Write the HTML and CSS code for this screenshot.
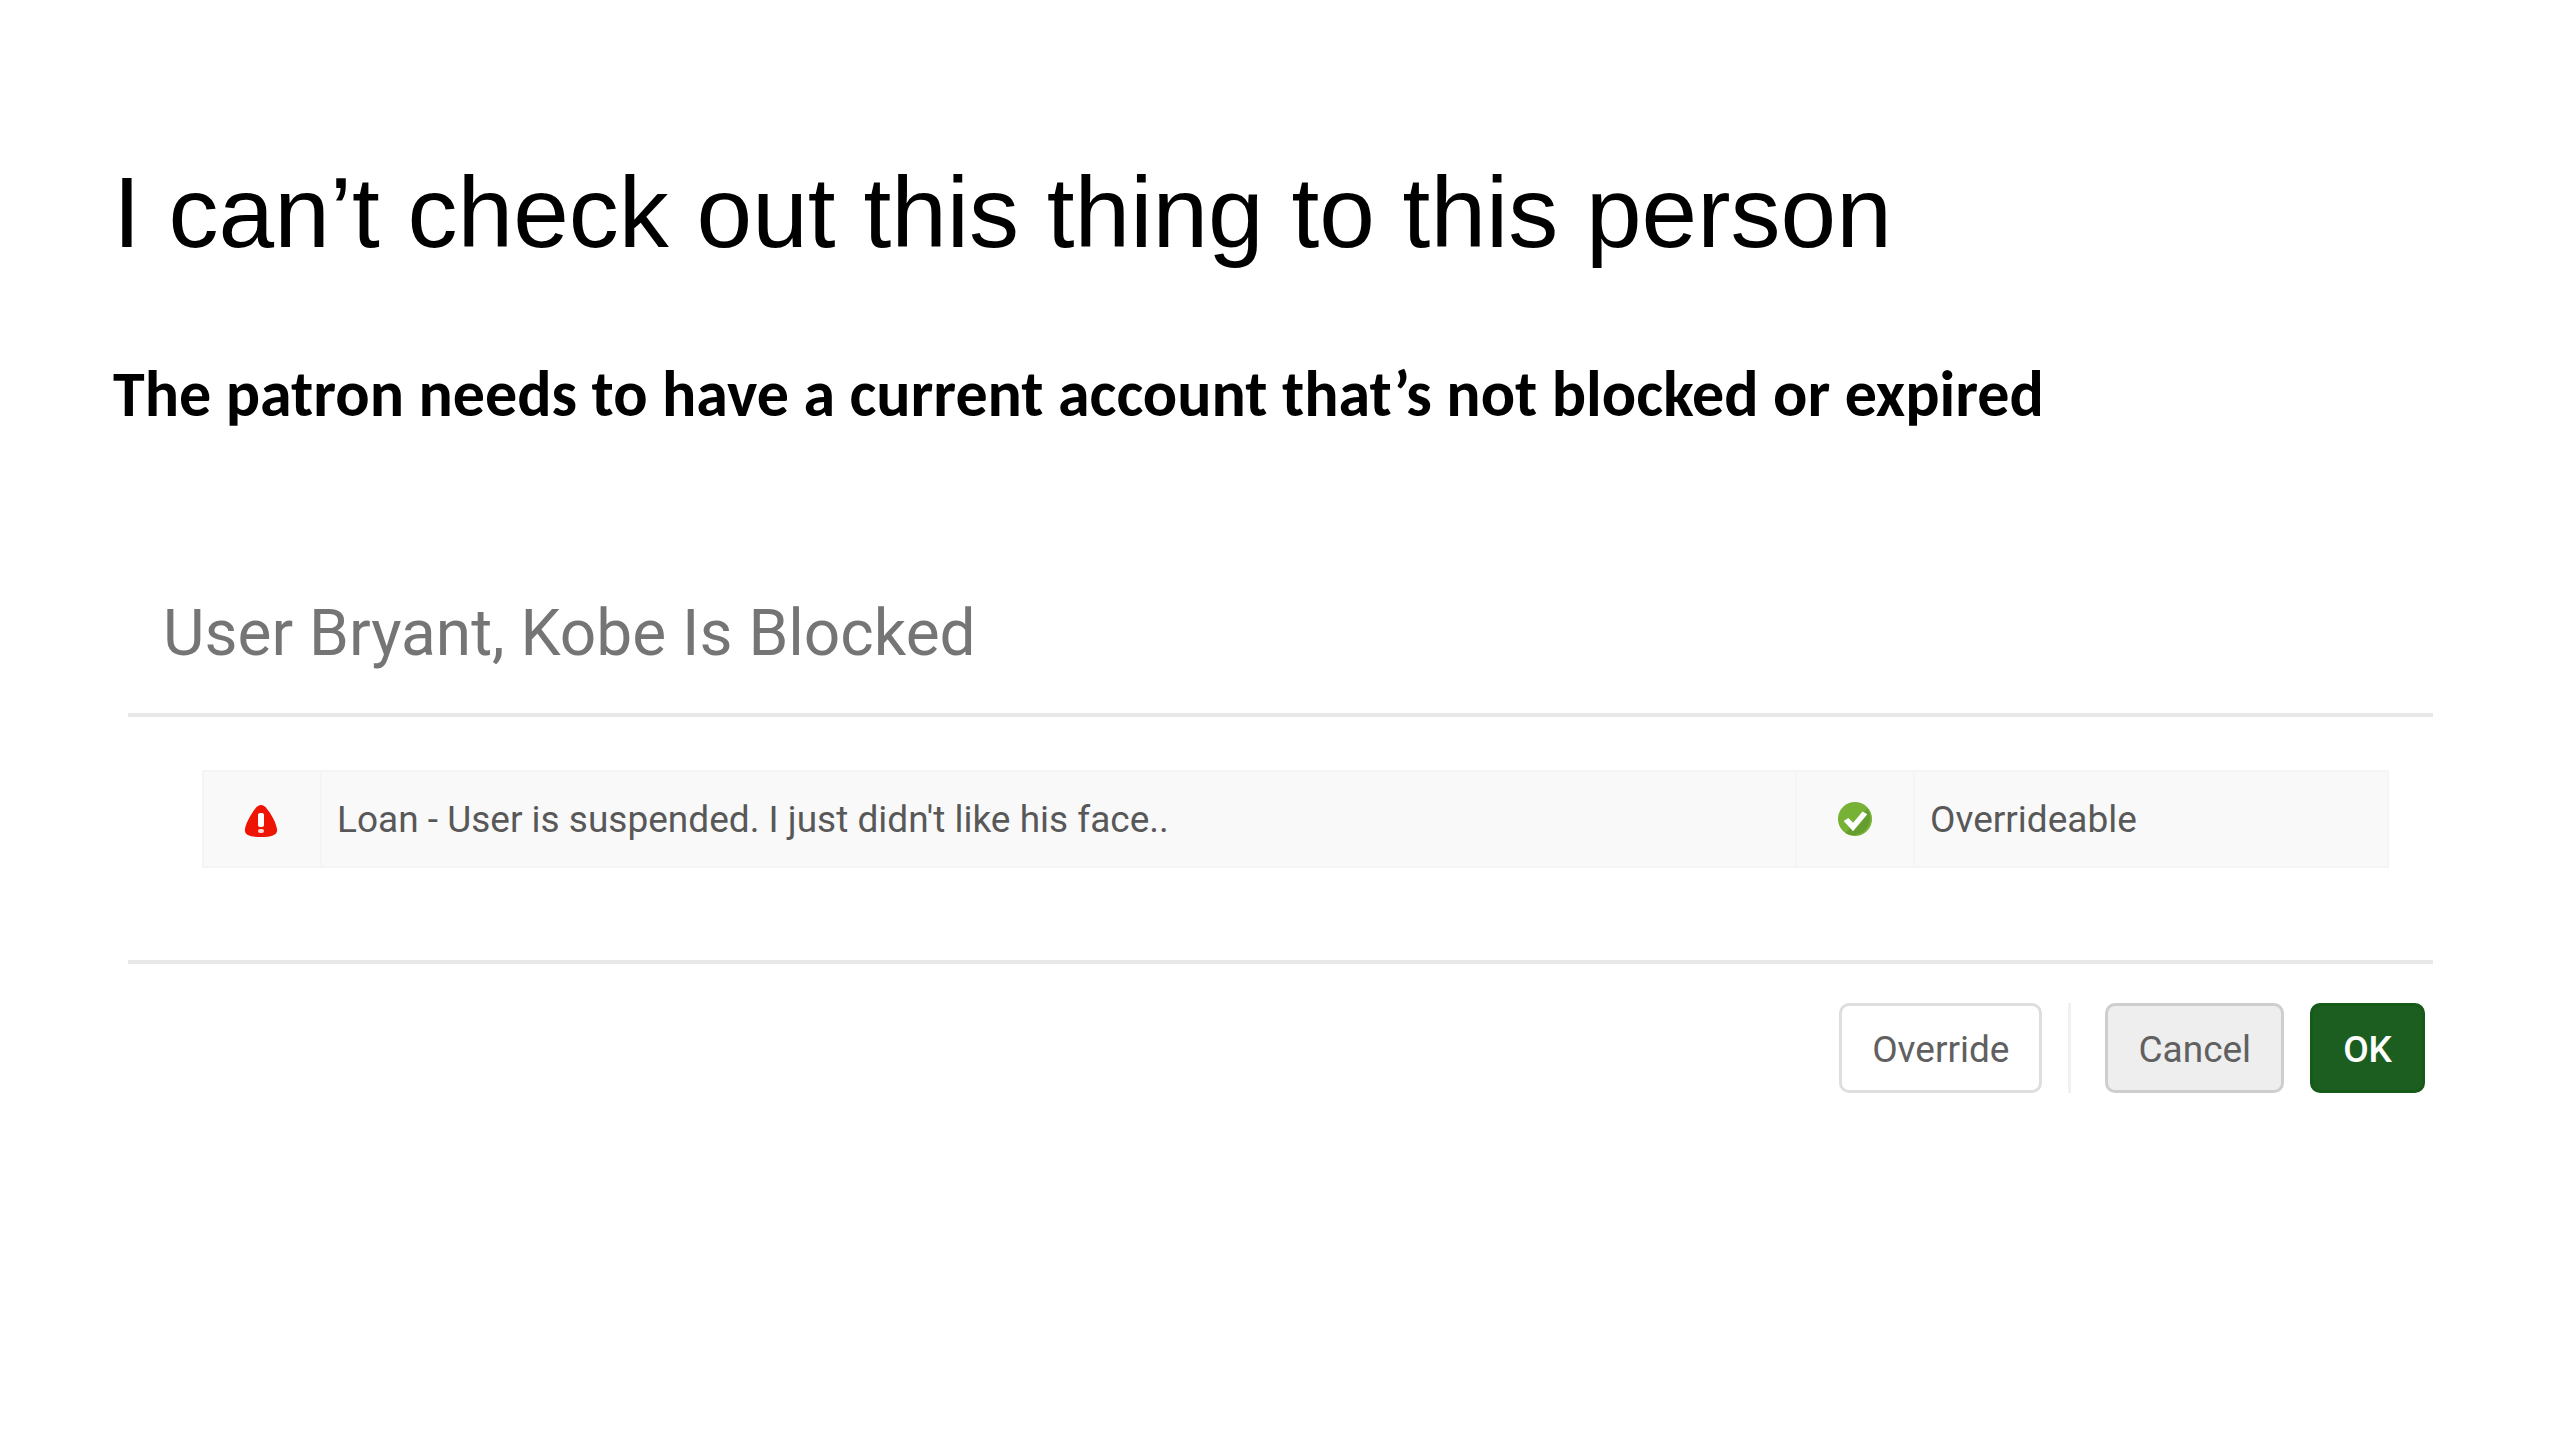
FILE: index.html
```html
<!DOCTYPE html>
<html lang="en">
<head>
<meta charset="UTF-8">
<meta name="viewport" content="width=device-width, initial-scale=1.0">
<title>I can’t check out this thing to this person</title>
<link rel="stylesheet" href="styles.css">
</head>
<body>
    <div class="slide">
        <h1>I can’t check out this thing to this person</h1>
        <p class="subtitle">The patron needs to have a current account that’s not blocked or expired</p>

        <div class="dialog">
            <h2>User Bryant, Kobe Is Blocked</h2>
            <div class="dialog-body">
                <table class="blocks">
                    <tr>
                        <td class="icon-cell">
                            <svg class="icon" viewBox="0 0 36 36" role="img" aria-label="Blocked">
                                <path d="M17 2C19 2 21 3 23 6C28 12 32 20 33 26C34 32 28 34 17 34S0 32 1 26C2 20 7 11 11 6C13 3 15 2 17 2Z" fill="#ee1504"/>
                                <rect x="14" y="10" width="6" height="14" rx="2" fill="#fff"/>
                                <rect x="14" y="26" width="6" height="4" rx="2" fill="#ffd6d0"/>
                            </svg>
                        </td>
                        <td>Loan - User is suspended. I just didn't like his face..</td>
                        <td class="icon-cell">
                            <svg class="icon check" viewBox="0 0 38 38" role="img" aria-label="Yes">
                                <circle cx="19" cy="19" r="18" fill="#77b135"/>
                                <path d="M32 8A18 18 0 0 1 9 34Z" fill="#659d2f"/>
                                <path d="M7 21L12 18L17 23L27 11L32 14L17 32Z" fill="#fff"/>
                            </svg>
                        </td>
                        <td class="status">Overrideable</td>
                    </tr>
                </table>
            </div>
            <div class="dialog-footer">
                <button type="button">Override</button>
                <span class="separator"></span>
                <button type="button" class="cancel">Cancel</button>
                <button type="button" class="ok">OK</button>
            </div>
        </div>
    </div>
</body>
</html>
```

FILE: styles.css
```css
body {
    margin: 0;
    background-color: #fff;
    color: #000;
}

.slide {
    padding: 156px 127px 0 113px;
}

h1 {
    margin: 0;
    font-family: "Liberation Sans", Arial, sans-serif;
    font-size: 100px;
    font-weight: normal;
    line-height: 112px;
}

.subtitle {
    margin: 88px 0 0;
    font-family: Carlito, Calibri, Lato, sans-serif;
    font-size: 64px;
    font-weight: bold;
    line-height: 76px;
}

.dialog {
    margin: 154px 0 0 15px;
    font-family: Roboto, sans-serif;
    font-size: 37px;
    color: #585858;
}

h2 {
    margin: 0;
    padding: 0 35px 31px;
    border-bottom: 4px solid #e8e8e8;
    font-size: 64px;
    font-weight: normal;
    line-height: 96px;
    color: #757575;
}

.dialog-body {
    padding: 53px 44px 92px 74px;
    border-bottom: 4px solid #e8e8e8;
}

.blocks {
    width: 100%;
    table-layout: fixed;
    border-collapse: collapse;
    background-color: #f9f9f9;
}

.blocks td {
    height: 92px;
    padding: 2px 15px 0;
    border: 2px solid #f5f5f5;
    line-height: 48px;
}

.blocks .icon-cell {
    width: 116px;
    padding: 0;
    text-align: center;
}

.blocks .status {
    width: 442px;
}

.icon {
    width: 36px;
    height: 36px;
    vertical-align: middle;
}

.check {
    margin-bottom: 4px;
}

.dialog-footer {
    display: flex;
    justify-content: flex-end;
    gap: 26px;
    padding: 39px 8px 0;
}

button {
    box-sizing: border-box;
    height: 90px;
    padding: 2px 30px 0;
    border: 3px solid #dedede;
    border-radius: 10px;
    background-color: #fff;
    font-family: inherit;
    font-size: 37px;
    color: #606060;
    cursor: pointer;
}

.separator {
    width: 3px;
    background-color: #f0f0f0;
}

.cancel {
    margin-left: 8px;
    border-color: #cecece;
    background-color: #eee;
}

.ok {
    border-color: #155a19;
    background-color: #1b5e20;
    font-weight: 500;
    color: #fff;
}
```
